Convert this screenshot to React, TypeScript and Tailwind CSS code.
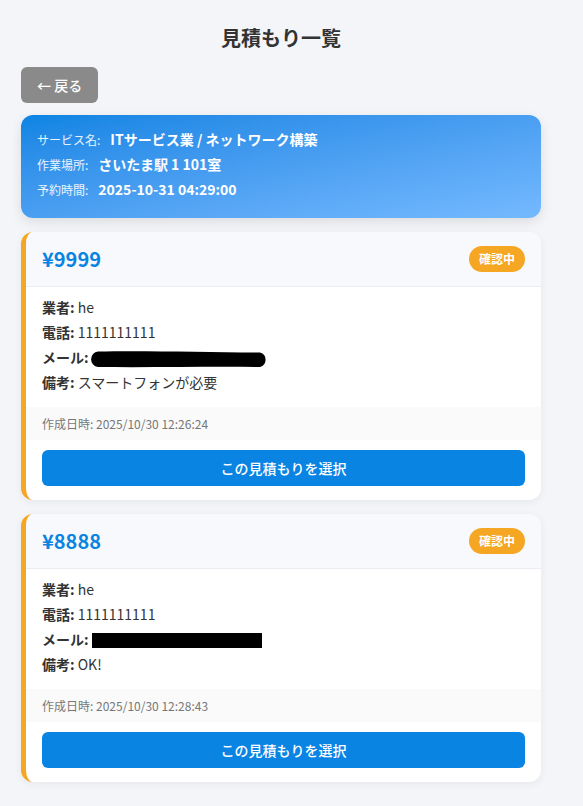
import React from "react";

interface Quote {
  id: string;
  price: number;
  vendor: string;
  phone: string;
  note: string;
  createdAt: string;
  redact: "blob" | "box";
}

const QUOTES: Quote[] = [
  {
    id: "q1",
    price: 9999,
    vendor: "he",
    phone: "1111111111",
    note: "スマートフォンが必要",
    createdAt: "2025/10/30 12:26:24",
    redact: "blob",
  },
  {
    id: "q2",
    price: 8888,
    vendor: "he",
    phone: "1111111111",
    note: "OK!",
    createdAt: "2025/10/30 12:28:43",
    redact: "box",
  },
];

const INFO = [
  { label: "サービス名:", value: "ITサービス業 / ネットワーク構築" },
  { label: "作業場所:", value: "さいたま駅 1 101室" },
  { label: "予約時間:", value: "2025-10-31 04:29:00" },
];

// hand-drawn marker over the e-mail address
function Scribble() {
  return (
    <svg
      width="180"
      height="18"
      viewBox="0 0 180 18"
      className="inline-block align-middle -mt-px"
    >
      <path
        d="M9 1.5 C50 0.5 120 2 171 2.5 A7.5 7.5 0 0 1 171 17 C120 16.5 60 17.5 9 17 A7.8 7.8 0 0 1 9 1.5 Z"
        fill="#000"
      />
    </svg>
  );
}

function QuoteCard({ quote }: { quote: Quote }) {
  return (
    <div className="bg-white rounded-xl border-l-[5px] border-[#f5a623] shadow-[0_2px_8px_rgba(0,0,0,0.06)] overflow-hidden">
      <div className="flex items-center justify-between px-4 py-[11px] bg-[#f8f9fc] border-b border-[#ebedf2]">
        <span className="text-[20px] leading-8 font-bold text-[#0984e3]">
          ¥{quote.price}
        </span>
        <span className="bg-[#f5a623] text-white text-[12px] leading-[18px] font-bold px-[10px] py-1 rounded-full">
          確認中
        </span>
      </div>

      <div className="px-4 pt-2 pb-3 text-[14px] leading-[25px] text-[#333]">
        <p>
          <b className="font-bold">業者:</b> {quote.vendor}
        </p>
        <p>
          <b className="font-bold">電話:</b> {quote.phone}
        </p>
        <p>
          <b className="font-bold">メール:</b>
          {quote.redact === "blob" ? (
            <Scribble />
          ) : (
            <>
              {" "}
              <span className="inline-block align-middle -mt-px w-[170px] h-[15px] bg-black" />
            </>
          )}
        </p>
        <p>
          <b className="font-bold">備考:</b> {quote.note}
        </p>
      </div>

      <div className="px-4 py-2 bg-[#fafafa] text-[12px] leading-[17px] text-[#777]">
        作成日時: {quote.createdAt}
      </div>

      <div className="px-4 pt-2.5 pb-3.5">
        <button className="w-full h-9 rounded-md bg-[#0984e3] text-white text-[14px] font-medium">
          この見積もりを選択
        </button>
      </div>
    </div>
  );
}

export default function App() {
  return (
    <div className="min-h-screen bg-[#f4f5f9] font-['Noto_Sans_CJK_JP','Noto_Sans',sans-serif] text-[#333]">
      <div className="w-[520px] ml-[21px] pt-6 pb-6">
        <h1 className="text-center text-[20px] leading-7 font-bold text-[#333] mb-[15px]">
          見積もり一覧
        </h1>

        <button className="h-9 px-4 rounded-md bg-[#8a8a8a] text-white text-[14px] font-medium mb-3">
          ← 戻る
        </button>

        <div className="rounded-xl bg-gradient-to-br from-[#0984e3] to-[#74b9ff] text-white px-4 pt-3 pb-4 shadow-[0_4px_12px_rgba(0,0,0,0.1)] mb-3.5">
          {INFO.map((row) => (
            <div key={row.label} className="flex items-center leading-[25px]">
              <span className="text-[12px] text-white/90 mr-2.5">{row.label}</span>
              <span className="text-[14px] font-bold">{row.value}</span>
            </div>
          ))}
        </div>

        <div className="flex flex-col gap-3.5">
          {QUOTES.map((q) => (
            <QuoteCard key={q.id} quote={q} />
          ))}
        </div>
      </div>
    </div>
  );
}
